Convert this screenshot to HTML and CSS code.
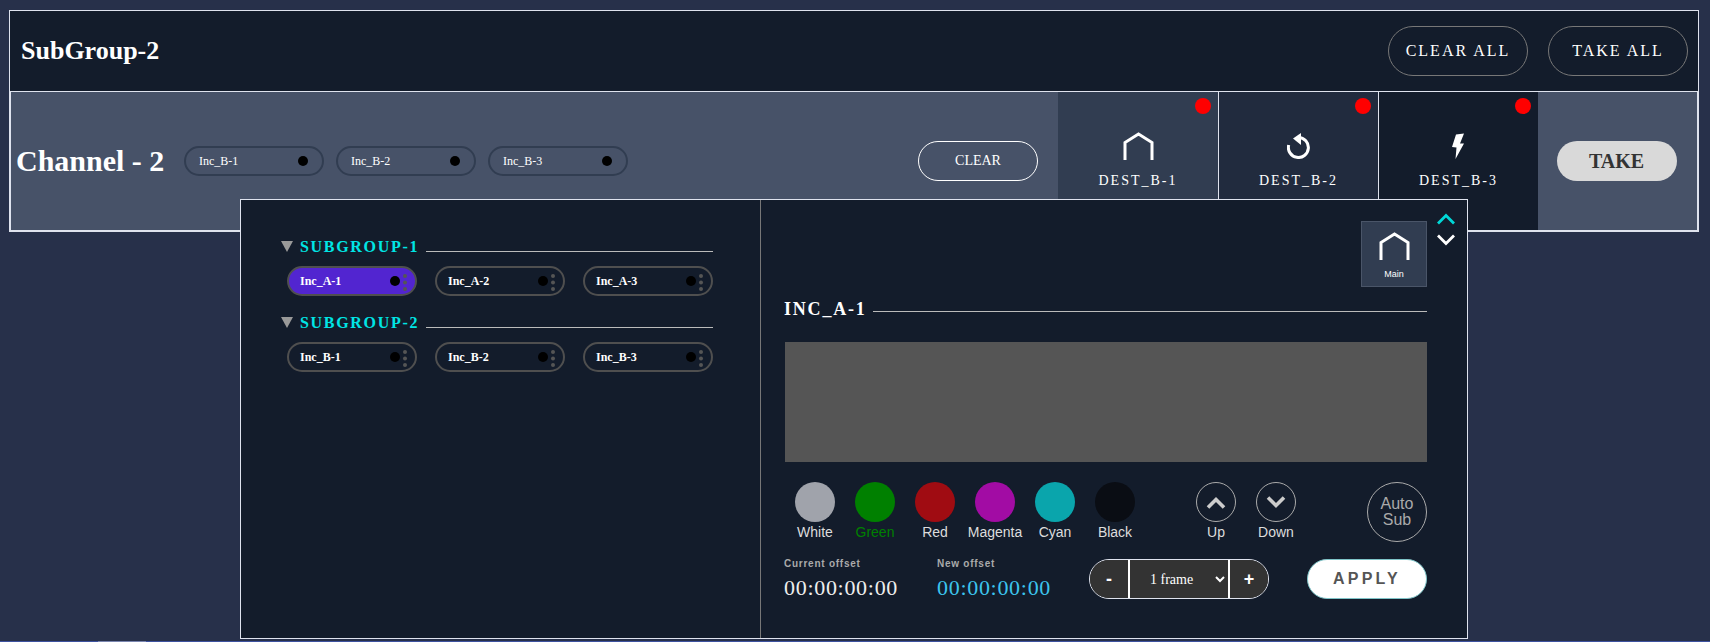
FILE: index.html
```html
<!DOCTYPE html>
<html lang="en">
<head>
<meta charset="utf-8">
<title>SubGroup-2</title>
<link rel="stylesheet" href="styles.css">
</head>
<body>
<main class="panel">
  <header class="group-bar">
    <h1 class="group-title">SubGroup-2</h1>
    <div class="group-actions">
      <button class="ghost-btn">CLEAR ALL</button>
      <button class="ghost-btn">TAKE ALL</button>
    </div>
  </header>
  <section class="channel">
    <h2 class="channel-title">Channel - 2</h2>
    <div class="channel-chips">
      <div class="slot"><span>Inc_B-1</span><i class="dot"></i></div>
      <div class="slot"><span>Inc_B-2</span><i class="dot"></i></div>
      <div class="slot"><span>Inc_B-3</span><i class="dot"></i></div>
    </div>
    <button class="clear-btn">CLEAR</button>
    <div class="dests">
      <div class="dest dest-1">
        <i class="tally"></i>
        <div class="dest-icon"><svg width="31" height="29" viewBox="0 0 31 29"><path d="M2 28V10.5L15.5 2L29 10.5V28" fill="none" stroke="#fff" stroke-width="3"/></svg></div>
        <span>DEST_B-1</span>
      </div>
      <div class="dest dest-2">
        <i class="tally"></i>
        <div class="dest-icon"><svg width="24" height="26" viewBox="0 0 24 26"><path d="M1.7 12A10 10 0 1 0 11.5 4.5" fill="none" stroke="#fff" stroke-width="3"/><path fill="#fff" d="M6 5.5L14 0V12z"/></svg></div>
        <span>DEST_B-2</span>
      </div>
      <div class="dest dest-3">
        <i class="tally"></i>
        <div class="dest-icon"><svg width="13" height="27" viewBox="0 0 13 27"><path fill="#fff" d="M4 1.5L12 .5L8 10.5H12L3.5 26L4.5 14.5L0 14z"/></svg></div>
        <span>DEST_B-3</span>
      </div>
    </div>
    <div class="take-wrap"><button class="take-btn">TAKE</button></div>
  </section>
</main>

<div class="popup">
  <div class="pane-left">
    <div class="sg">
      <div class="sg-head"><i class="tri"></i><span class="sg-name">SUBGROUP-1</span><i class="rule"></i></div>
      <div class="sg-chips">
        <div class="chip active"><span>Inc_A-1</span><i class="dot"></i><i class="more"></i></div>
        <div class="chip"><span>Inc_A-2</span><i class="dot"></i><i class="more"></i></div>
        <div class="chip"><span>Inc_A-3</span><i class="dot"></i><i class="more"></i></div>
      </div>
    </div>
    <div class="sg">
      <div class="sg-head"><i class="tri"></i><span class="sg-name">SUBGROUP-2</span><i class="rule"></i></div>
      <div class="sg-chips">
        <div class="chip"><span>Inc_B-1</span><i class="dot"></i><i class="more"></i></div>
        <div class="chip"><span>Inc_B-2</span><i class="dot"></i><i class="more"></i></div>
        <div class="chip"><span>Inc_B-3</span><i class="dot"></i><i class="more"></i></div>
      </div>
    </div>
  </div>
  <div class="pane-right">
    <div class="scroller">
      <svg width="18" height="12" viewBox="0 0 18 12"><path d="M1 10.5L9 2.5L17 10.5" fill="none" stroke="#00d8d8" stroke-width="2.8"/></svg>
      <svg width="18" height="12" viewBox="0 0 18 12"><path d="M1 1.5L9 9.5L17 1.5" fill="none" stroke="#fff" stroke-width="2.8"/></svg>
    </div>
    <div class="view-row">
      <div class="view-tile">
        <svg width="31" height="29" viewBox="0 0 31 29"><path d="M2 28V10.5L15.5 2L29 10.5V28" fill="none" stroke="#fff" stroke-width="3"/></svg>
        <span>Main</span>
      </div>
    </div>
    <div class="inc-head"><span class="inc-name">INC_A-1</span><i class="rule"></i></div>
    <div class="preview"></div>
    <div class="controls">
      <div class="swatches">
        <div class="swatch"><i class="sw sw-white"></i><span>White</span></div>
        <div class="swatch sw-label-green"><i class="sw sw-green"></i><span>Green</span></div>
        <div class="swatch"><i class="sw sw-red"></i><span>Red</span></div>
        <div class="swatch"><i class="sw sw-magenta"></i><span>Magenta</span></div>
        <div class="swatch"><i class="sw sw-cyan"></i><span>Cyan</span></div>
        <div class="swatch"><i class="sw sw-black"></i><span>Black</span></div>
      </div>
      <div class="nudges">
        <div class="swatch"><i class="sw sw-ring"><svg width="20" height="13" viewBox="0 0 20 13"><path d="M2 11.5L10 3.5L18 11.5" fill="none" stroke="#ccc" stroke-width="3.6"/></svg></i><span>Up</span></div>
        <div class="swatch"><i class="sw sw-ring"><svg width="20" height="13" viewBox="0 0 20 13"><path d="M2 1.5L10 9.5L18 1.5" fill="none" stroke="#ccc" stroke-width="3.6"/></svg></i><span>Down</span></div>
      </div>
      <button class="auto-sub">Auto<br>Sub</button>
    </div>
    <div class="offsets">
      <div class="offset offset-current">
        <span class="offset-label">Current offset</span>
        <span class="offset-time">00:00:00:00</span>
      </div>
      <div class="offset offset-new">
        <span class="offset-label">New offset</span>
        <span class="offset-time">00:00:00:00</span>
      </div>
      <div class="stepper">
        <button class="step">-</button>
        <select class="step-select"><option>1 frame</option></select>
        <button class="step">+</button>
      </div>
      <button class="apply">APPLY</button>
    </div>
  </div>
</div>
<div class="page-edge"><i class="page-thumb"></i></div>
</body>
</html>
```
FILE: styles.css
```css
* { box-sizing: border-box; }
html, body { height: 100%; }
body {
  margin: 0;
  padding: 10px 11px 0 9px;
  background: #27304a;
  font-family: "Liberation Serif", serif;
  color: #fff;
  overflow: hidden;
  position: relative;
}
button { font-family: inherit; cursor: pointer; color: inherit; background: none; }
i { display: block; font-style: normal; }

.group-bar {
  height: 81px;
  display: flex;
  align-items: center;
  justify-content: space-between;
  background: #131c2b;
  border: 1px solid #dfe3ee;
  border-bottom: 0;
  padding: 0 10px 0 11px;
}
.group-title { margin: 0; font-size: 26px; font-weight: 700; }
.group-actions { display: flex; gap: 20px; }
.ghost-btn {
  width: 140px;
  height: 50px;
  border: 1px solid #777;
  border-radius: 25px;
  font-size: 16px;
  letter-spacing: 2px;
}

.channel {
  height: 141px;
  display: flex;
  background: #475268;
  border: 2px solid #dfe3ee;
  border-top-width: 1px;
}
.channel-title {
  margin: 0;
  font-size: 30px;
  font-weight: 700;
  white-space: nowrap;
  align-self: center;
  padding-left: 5px;
  width: 173px;
}
.channel-chips { display: flex; gap: 12px; align-self: center; }
.slot {
  width: 140px;
  height: 30px;
  border: 2px solid #313d51;
  border-radius: 15px;
  display: flex;
  align-items: center;
  justify-content: space-between;
  padding: 0 14px 0 13px;
  font-size: 12px;
}
.dot { width: 10px; height: 10px; border-radius: 50%; background: #000; }
.clear-btn {
  width: 120px;
  height: 40px;
  margin-left: auto;
  margin-right: 20px;
  align-self: center;
  border: 1px solid #fff;
  border-radius: 20px;
  font-size: 14px;
}
.dests { display: flex; }
.dest {
  width: 160px;
  position: relative;
  display: flex;
  flex-direction: column;
  align-items: center;
  padding-top: 38px;
  font-size: 14px;
  line-height: 16px;
  letter-spacing: 2px;
}
.dest-1 { background: #313d51; }
.dest-2 { background: #212b3e; border-left: 1px solid #dfe3ee; }
.dest-3 { background: #131c2b; border-left: 1px solid #dfe3ee; }
.dest-icon {
  height: 32px;
  margin-bottom: 11px;
  display: flex;
  align-items: center;
  justify-content: center;
}
.tally {
  position: absolute;
  top: 6px;
  right: 7px;
  width: 16px;
  height: 16px;
  border-radius: 50%;
  background: #f00;
}
.take-wrap { width: 159px; padding-right: 2px; display: flex; align-items: center; justify-content: center; }
.take-btn {
  width: 120px;
  height: 40px;
  border: 0;
  border-radius: 20px;
  background: #d9d9d9;
  color: #333;
  font-size: 20px;
  font-weight: 700;
}

.popup {
  position: absolute;
  left: 240px;
  top: 199px;
  width: 1228px;
  height: 440px;
  display: flex;
  background: #131c2b;
  border: 1px solid #dfe3ee;
}
.pane-left {
  width: 520px;
  border-right: 1px solid #777;
  padding: 38px 47px 0 40px;
  display: flex;
  flex-direction: column;
  gap: 18px;
}
.sg-head { display: flex; align-items: center; height: 19px; }
.tri {
  width: 0;
  height: 0;
  border-left: 6.5px solid transparent;
  border-right: 6.5px solid transparent;
  border-top: 11px solid #999;
  margin: 0 7px 2px 0;
}
.sg-name {
  color: #00e5e5;
  font-size: 16px;
  font-weight: 700;
  letter-spacing: 1.7px;
  white-space: nowrap;
  margin: 0 7px 2px 0;
}
.rule { flex: 1; height: 1px; background: #bbb; margin-top: 8px; }
.sg-chips { display: flex; justify-content: space-between; margin: 9px 0 0 6px; }
.chip {
  position: relative;
  width: 130px;
  height: 30px;
  border: 2px solid #4f4f4f;
  border-radius: 15px;
  display: flex;
  align-items: center;
  justify-content: space-between;
  padding: 0 15px 0 11px;
  font-size: 12px;
  font-weight: 700;
}
.chip.active { background: #5225d0; }
.more {
  position: absolute;
  right: 8px;
  top: 6px;
  width: 4px;
  height: 4px;
  border-radius: 50%;
  background: #555;
  box-shadow: 0 6.5px #555, 0 13px #555;
}

.pane-right {
  flex: 1;
  position: relative;
  padding: 21px 40px 0 24px;
}
.scroller {
  position: absolute;
  right: 12px;
  top: 13px;
  display: flex;
  flex-direction: column;
  gap: 9px;
}
.view-row { display: flex; justify-content: flex-end; }
.view-tile {
  width: 66px;
  height: 66px;
  background: #313d51;
  border: 1px solid #4a5568;
  display: flex;
  flex-direction: column;
  align-items: center;
  padding-top: 10px;
  font-family: "Liberation Sans", sans-serif;
  font-size: 9px;
  line-height: 10px;
  gap: 8px;
}
.inc-head { display: flex; align-items: center; margin: 12px 0 0 -1px; height: 20px; }
.inc-name { font-size: 18px; font-weight: 700; letter-spacing: 1.8px; margin-right: 6px; white-space: nowrap; }
.inc-head .rule { margin-top: 4px; }
.preview { height: 120px; background: #555; margin-top: 23px; }
.controls { display: flex; margin-top: 20px; font-family: "Liberation Sans", sans-serif; align-items: flex-start; }
.swatches { display: flex; width: 401px; }
.swatch {
  width: 60px;
  display: flex;
  flex-direction: column;
  align-items: center;
  gap: 2px;
  font-size: 14px;
  color: #ddd;
}
.sw { width: 40px; height: 40px; border-radius: 50%; }
.sw-white { background: #a0a3ab; }
.sw-green { background: #008000; }
.sw-red { background: #a00c12; }
.sw-magenta { background: #a20ca4; }
.sw-cyan { background: #0aa5ac; }
.sw-black { background: #0a0d14; }
.sw-label-green { color: #008000; }
.sw-ring {
  border: 1px solid #aaa;
  display: flex;
  align-items: center;
  justify-content: center;
}
.nudges { display: flex; }
.auto-sub {
  width: 60px;
  height: 60px;
  border: 1px solid #aaa;
  border-radius: 50%;
  margin-left: auto;
  padding: 0;
  font-family: "Liberation Sans", sans-serif;
  font-size: 16px;
  line-height: 16px;
  color: #aaa;
}
.offsets { display: flex; align-items: flex-start; margin-top: 16px; }
.offset { width: 152px; display: flex; flex-direction: column; }
.offset-current { width: 153px; margin-left: -1px; }
.offset-label {
  font-family: "Liberation Sans", sans-serif;
  font-size: 10px;
  font-weight: 700;
  letter-spacing: .75px;
  color: #aaa;
  line-height: 12px;
}
.offset-time { font-size: 22px; letter-spacing: .7px; color: #eee; line-height: 28px; margin-top: 4px; }
.offset-new .offset-time { color: #3cc4ee; }
.stepper {
  display: flex;
  width: 180px;
  height: 40px;
  margin-top: 1px;
  border: 1px solid #dfe3ee;
  border-radius: 20px;
  overflow: hidden;
  background: #333;
}
.step {
  flex: 1;
  border: 0;
  background: #333;
  color: #fff;
  font-family: "Liberation Sans", sans-serif;
  font-size: 18px;
  font-weight: 700;
  padding: 0;
}
.step-select {
  width: 102px;
  flex: none;
  border: 0;
  border-left: 2px solid #fff;
  border-right: 2px solid #fff;
  background: #333;
  color: #fff;
  font-family: "Liberation Serif", serif;
  font-size: 14px;
  padding: 0 4px 0 16px;
}
.apply {
  width: 120px;
  height: 40px;
  margin-top: 1px;
  margin-left: auto;
  border: 1px solid #7fc4c8;
  border-radius: 20px;
  background: #fff;
  color: #555;
  font-family: "Liberation Sans", sans-serif;
  font-size: 16px;
  font-weight: 700;
  letter-spacing: 3.2px;
}
.page-edge {
  position: absolute;
  left: 0;
  right: 0;
  bottom: 0;
  height: 1px;
  background: #3d52a0;
}
.page-thumb { width: 48px; height: 1px; margin-left: 98px; background: #7a86b0; }
```
